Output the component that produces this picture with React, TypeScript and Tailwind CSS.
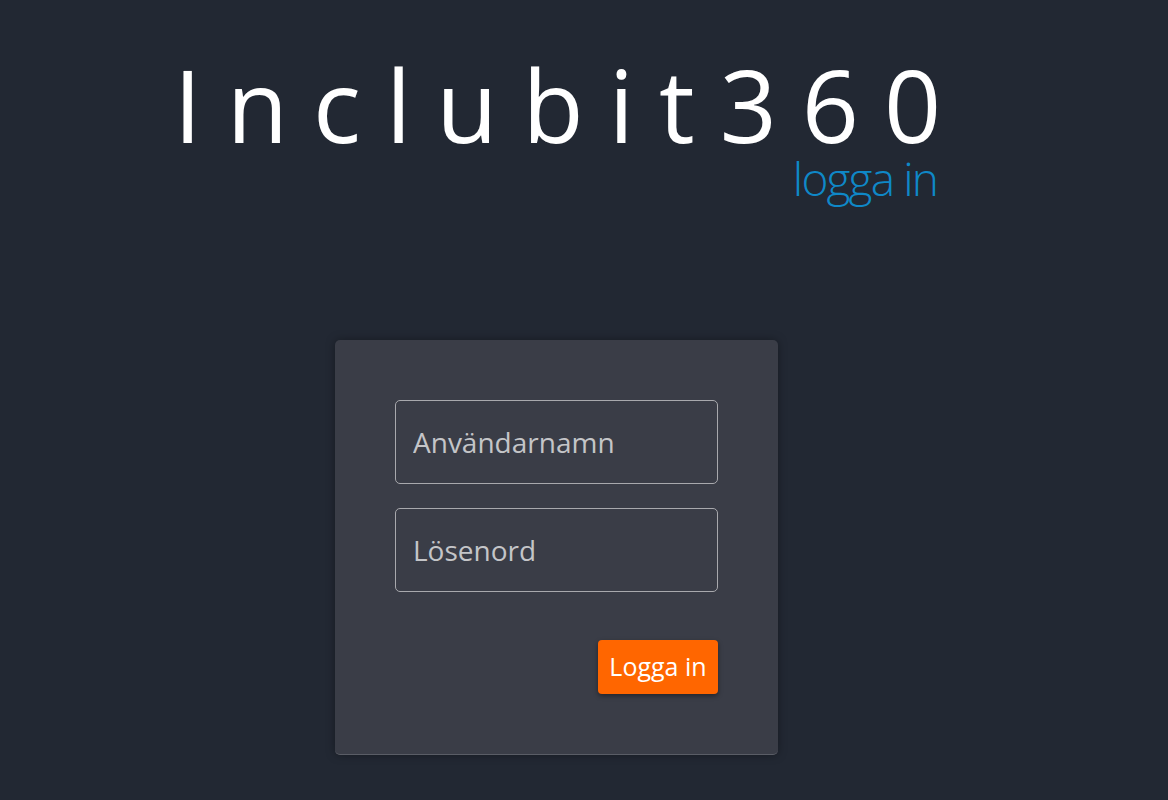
export default function App() {
  return (
    <div className="min-h-screen bg-[#222833] pt-[54px] font-['Open_Sans',sans-serif]">
      <header className="flex justify-center">
        <div className="mr-[28px] flex w-fit flex-col">
          <h1 className="text-[100px] leading-[100px] font-normal tracking-[0.25em] text-white">
            Inclubit360
          </h1>
          <p className="mt-[1px] mr-[29px] text-right text-[46px] leading-[46px] font-light tracking-[-0.04em] text-[#0f88c8]">
            logga in
          </p>
        </div>
      </header>

      <main className="mt-[139px] flex justify-center">
        <form className="mr-[55px] flex w-[443px] flex-col rounded-[5px] border-b border-[#5a5d66] bg-[#3a3d47] p-[60px] shadow-[0_0_10px_rgba(0,0,0,0.35)]">
          <input
            type="text"
            placeholder="Användarnamn"
            className="h-[84px] w-full rounded-[5px] border border-[#a8a9ad] bg-transparent px-[17px] text-[28px] text-[#c4c5c8] outline-none placeholder:text-[#c4c5c8]"
          />
          <input
            type="password"
            placeholder="Lösenord"
            className="mt-[24px] h-[84px] w-full rounded-[5px] border border-[#a8a9ad] bg-transparent px-[17px] text-[28px] text-[#c4c5c8] outline-none placeholder:text-[#c4c5c8]"
          />
          <div className="mt-[48px] flex justify-end">
            <button
              type="button"
              className="h-[54px] w-[120px] rounded-[4px] bg-[#ff6600] text-[25px] text-white shadow-[0_2px_5px_rgba(0,0,0,0.4)]"
            >
              Logga in
            </button>
          </div>
        </form>
      </main>
    </div>
  );
}
